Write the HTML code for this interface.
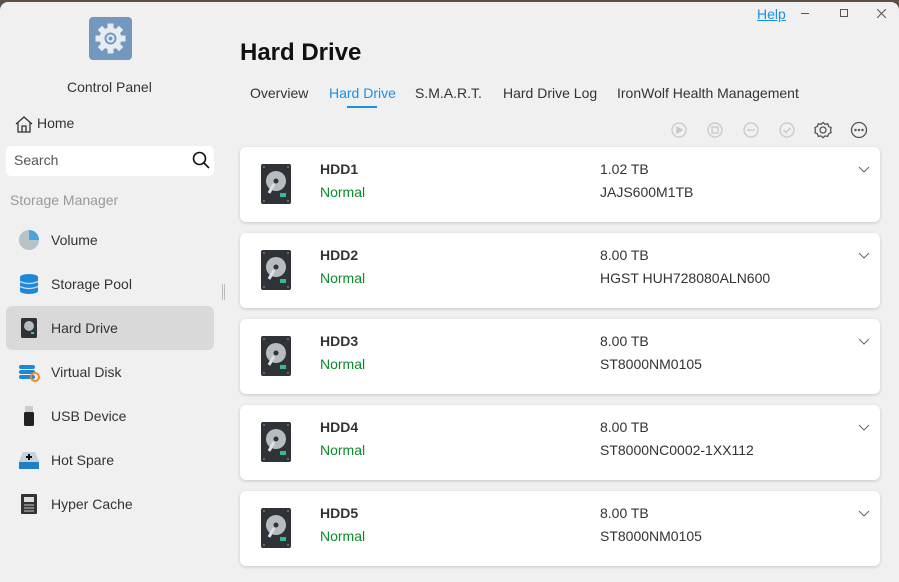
<!DOCTYPE html>
<html><head><style>
*{box-sizing:border-box;margin:0;padding:0}
body{width:899px;height:576px;background:#5a5048;font-family:"Liberation Sans",sans-serif;overflow:hidden;position:relative}
.win{position:absolute;left:0;top:2px;width:899px;height:580px;background:#f0f0f0;border-radius:8px 8px 0 0}
.abs{position:absolute}
.side{font-size:14px;color:#333}
.nav{position:absolute;left:6px;width:208px;height:44px;border-radius:6px}
.nav .ic{position:absolute;left:12px;top:11px;width:22px;height:22px}
.nav span{position:absolute;left:45px;top:14px;font-size:14px;color:#333}
.card{position:absolute;left:240px;width:640px;height:75px;background:#fff;border-radius:6px;box-shadow:0 1px 3px rgba(0,0,0,.18)}
.card .n{position:absolute;left:80px;top:14px;font-weight:bold;font-size:14px;color:#333}
.card .s{position:absolute;left:80px;top:37px;font-size:14px;color:#0a8a2a}
.card .c{position:absolute;left:360px;top:14px;font-size:14px;color:#333}
.card .m{position:absolute;left:360px;top:37px;font-size:14px;color:#333}
.card svg.h{position:absolute;left:21px;top:17px}
.card svg.ch{position:absolute;right:10px;top:19px}
.tab{position:absolute;top:83px;font-size:14px;color:#333}
</style></head><body>
<div class="win">
<div class="abs" style="left:89px;top:15px;width:43px;height:43px;border-radius:4px;background:#7299bd">
<svg width="43" height="43" viewBox="0 0 43 43"><g fill="#e8ecf0" transform="translate(21.5,21.5)">
<circle r="11"/>
<rect x="-3" y="-15" width="6" height="6"/><rect x="-3" y="-15" width="6" height="6" transform="rotate(45)"/><rect x="-3" y="-15" width="6" height="6" transform="rotate(90)"/><rect x="-3" y="-15" width="6" height="6" transform="rotate(135)"/><rect x="-3" y="-15" width="6" height="6" transform="rotate(180)"/><rect x="-3" y="-15" width="6" height="6" transform="rotate(225)"/><rect x="-3" y="-15" width="6" height="6" transform="rotate(270)"/><rect x="-3" y="-15" width="6" height="6" transform="rotate(315)"/>
<circle r="6" fill="#7299bd"/><circle r="4"/><circle r="2" fill="#7299bd"/></g></svg></div>
<div class="abs side" style="left:67px;top:77px">Control Panel</div>
<svg class="abs" style="left:15px;top:113px" width="18" height="18" viewBox="0 0 18 18" fill="none" stroke="#333" stroke-width="1.3"><path d="M1 9L9 2l8 7M3 7.5V17h12V7.5M7 17v-6h4v6"/></svg>
<div class="abs side" style="left:37px;top:113px">Home</div>
<div class="abs" style="left:6px;top:144px;width:208px;height:30px;background:#fff;border-radius:5px"></div>
<div class="abs side" style="left:14px;top:150px;color:#555">Search</div>
<svg class="abs" style="left:192px;top:149px" width="18" height="18" viewBox="0 0 18 18" fill="none" stroke="#111" stroke-width="1.6"><circle cx="7.5" cy="7.5" r="6"/><path d="M12 12l5 5"/></svg>
<div class="abs side" style="left:10px;top:190px;color:#999">Storage Manager</div>
<div class="nav" style="top:216px"><svg class="ic" viewBox="0 0 22 22"><circle cx="11" cy="11" r="10" fill="#b8c3c8"/><path d="M11 11V1a10 10 0 0 1 10 10z" fill="#4aa3e0"/></svg><span>Volume</span></div>
<div class="nav" style="top:260px"><svg class="ic" viewBox="0 0 22 22"><ellipse cx="11" cy="4" rx="9" ry="3" fill="#1e88d8"/><rect x="2" y="4" width="18" height="14" fill="#1e88d8"/><ellipse cx="11" cy="18" rx="9" ry="3" fill="#1e88d8"/><path d="M2 8.5q9 4 18 0M2 13.5q9 4 18 0" stroke="#cde" stroke-width="1.3" fill="none"/></svg><span>Storage Pool</span></div>
<div class="nav" style="top:304px;background:#d9d9d9"><svg class="ic" viewBox="0 0 22 22"><rect x="3" y="1" width="16" height="20" rx="1.5" fill="#2f3337"/><circle cx="11" cy="9" r="5" fill="#b7bdbf"/><rect x="13" y="15" width="3" height="2" fill="#3c9"/></svg><span>Hard Drive</span></div>
<div class="nav" style="top:348px"><svg class="ic" viewBox="0 0 22 22"><rect x="1" y="4" width="16" height="4" rx="2" fill="#1e88d8"/><rect x="1" y="9" width="16" height="4" rx="2" fill="#1e88d8"/><rect x="1" y="14" width="16" height="4" rx="2" fill="#1e88d8"/><circle cx="17" cy="16" r="4" fill="none" stroke="#f08a24" stroke-width="2"/></svg><span>Virtual Disk</span></div>
<div class="nav" style="top:392px"><svg class="ic" viewBox="0 0 22 22"><rect x="7" y="1" width="8" height="6" fill="#ccc"/><rect x="6" y="7" width="10" height="14" rx="1.5" fill="#222"/></svg><span>USB Device</span></div>
<div class="nav" style="top:436px"><svg class="ic" viewBox="0 0 22 22"><path d="M1 12l4-9h12l4 9v8H1z" fill="#c9d1d6"/><rect x="1" y="13" width="20" height="7" fill="#1e7fc8"/><path d="M11 5v6M8 8h6" stroke="#111" stroke-width="2"/></svg><span>Hot Spare</span></div>
<div class="nav" style="top:480px"><svg class="ic" viewBox="0 0 22 22"><rect x="3" y="1" width="16" height="20" rx="1" fill="#333"/><rect x="6" y="4" width="10" height="5" fill="#ddd"/><path d="M6 12h10M6 15h10M6 18h10" stroke="#ccc"/></svg><span>Hyper Cache</span></div>
<div class="abs" style="left:222px;top:282px;width:3px;height:16px;border-left:1px solid #bbb;border-right:1px solid #bbb"></div>

<div class="abs" style="left:757px;top:4px;font-size:14px;color:#1a8fe6;text-decoration:underline">Help</div>
<div class="abs" style="left:801px;top:11px;width:8px;height:1px;background:#555"></div>
<div class="abs" style="left:840px;top:7px;width:8px;height:8px;border:1px solid #555"></div>
<svg class="abs" style="left:877px;top:7px" width="9" height="9" stroke="#555"><path d="M0 0l9 9M9 0L0 9"/></svg>
<div class="abs" style="left:240px;top:37px;font-size:24px;font-weight:bold;color:#111">Hard Drive</div>
<div class="tab" style="left:250px">Overview</div>
<div class="tab" style="left:329px;color:#1a8fe6">Hard Drive</div>
<div class="abs" style="left:347px;top:104px;width:30px;height:2px;background:#1a8fe6"></div>
<div class="tab" style="left:415px">S.M.A.R.T.</div>
<div class="tab" style="left:503px">Hard Drive Log</div>
<div class="tab" style="left:617px">IronWolf Health Management</div>
<svg class="abs" style="left:670px;top:119px" width="200" height="18" fill="none" stroke-width="1.3">
<g stroke="#c8c8c8"><circle cx="9" cy="9" r="7"/><path d="M7 6v6l5-3z" fill="#c8c8c8"/>
<circle cx="45" cy="9" r="7"/><rect x="42" y="6" width="6" height="6"/>
<circle cx="81" cy="9" r="7"/><path d="M77 9h8"/>
<circle cx="117" cy="9" r="7"/><path d="M113.5 9l2.5 2.5 4.5-4.5"/></g>
<g stroke="#555"><circle cx="153" cy="9" r="3"/><path d="M153 1.5l2 1.8 2.7-.5.9 2.6 2.5 1.2-.6 2.6.6 2.4-2.5 1.2-.9 2.6-2.7-.5-2 1.8-2-1.8-2.7.5-.9-2.6-2.5-1.2.6-2.4-.6-2.6 2.5-1.2.9-2.6 2.7.5z"/>
<circle cx="189" cy="9" r="7.5"/><circle cx="185.5" cy="9" r=".6" fill="#555"/><circle cx="189" cy="9" r=".6" fill="#555"/><circle cx="192.5" cy="9" r=".6" fill="#555"/></g></svg>

<div class="card" style="top:145px"><svg class="h" width="30" height="40" viewBox="0 0 30 40"><rect x="0" y="0" width="30" height="40" rx="2" fill="#2f3337"/><circle cx="3" cy="3" r="1" fill="#777"/><circle cx="27" cy="3" r="1" fill="#777"/><circle cx="3" cy="37" r="1" fill="#777"/><circle cx="27" cy="37" r="1" fill="#777"/><circle cx="15" cy="17" r="10" fill="#b7bdbf"/><circle cx="15" cy="17" r="2.5" fill="#2f3337"/><path d="M13 20l-5 9" stroke="#dde" stroke-width="3"/><rect x="19" y="29" width="6" height="4" fill="#3b9"/></svg><div class="n">HDD1</div><div class="s">Normal</div><div class="c">1.02 TB</div><div class="m">JAJS600M1TB</div><svg class="ch" width="12" height="8" fill="none" stroke="#666"><path d="M1 1l5 5 5-5"/></svg></div>
<div class="card" style="top:231px"><svg class="h" width="30" height="40" viewBox="0 0 30 40"><rect x="0" y="0" width="30" height="40" rx="2" fill="#2f3337"/><circle cx="3" cy="3" r="1" fill="#777"/><circle cx="27" cy="3" r="1" fill="#777"/><circle cx="3" cy="37" r="1" fill="#777"/><circle cx="27" cy="37" r="1" fill="#777"/><circle cx="15" cy="17" r="10" fill="#b7bdbf"/><circle cx="15" cy="17" r="2.5" fill="#2f3337"/><path d="M13 20l-5 9" stroke="#dde" stroke-width="3"/><rect x="19" y="29" width="6" height="4" fill="#3b9"/></svg><div class="n">HDD2</div><div class="s">Normal</div><div class="c">8.00 TB</div><div class="m">HGST HUH728080ALN600</div><svg class="ch" width="12" height="8" fill="none" stroke="#666"><path d="M1 1l5 5 5-5"/></svg></div>
<div class="card" style="top:317px"><svg class="h" width="30" height="40" viewBox="0 0 30 40"><rect x="0" y="0" width="30" height="40" rx="2" fill="#2f3337"/><circle cx="3" cy="3" r="1" fill="#777"/><circle cx="27" cy="3" r="1" fill="#777"/><circle cx="3" cy="37" r="1" fill="#777"/><circle cx="27" cy="37" r="1" fill="#777"/><circle cx="15" cy="17" r="10" fill="#b7bdbf"/><circle cx="15" cy="17" r="2.5" fill="#2f3337"/><path d="M13 20l-5 9" stroke="#dde" stroke-width="3"/><rect x="19" y="29" width="6" height="4" fill="#3b9"/></svg><div class="n">HDD3</div><div class="s">Normal</div><div class="c">8.00 TB</div><div class="m">ST8000NM0105</div><svg class="ch" width="12" height="8" fill="none" stroke="#666"><path d="M1 1l5 5 5-5"/></svg></div>
<div class="card" style="top:403px"><svg class="h" width="30" height="40" viewBox="0 0 30 40"><rect x="0" y="0" width="30" height="40" rx="2" fill="#2f3337"/><circle cx="3" cy="3" r="1" fill="#777"/><circle cx="27" cy="3" r="1" fill="#777"/><circle cx="3" cy="37" r="1" fill="#777"/><circle cx="27" cy="37" r="1" fill="#777"/><circle cx="15" cy="17" r="10" fill="#b7bdbf"/><circle cx="15" cy="17" r="2.5" fill="#2f3337"/><path d="M13 20l-5 9" stroke="#dde" stroke-width="3"/><rect x="19" y="29" width="6" height="4" fill="#3b9"/></svg><div class="n">HDD4</div><div class="s">Normal</div><div class="c">8.00 TB</div><div class="m">ST8000NC0002-1XX112</div><svg class="ch" width="12" height="8" fill="none" stroke="#666"><path d="M1 1l5 5 5-5"/></svg></div>
<div class="card" style="top:489px"><svg class="h" width="30" height="40" viewBox="0 0 30 40"><rect x="0" y="0" width="30" height="40" rx="2" fill="#2f3337"/><circle cx="3" cy="3" r="1" fill="#777"/><circle cx="27" cy="3" r="1" fill="#777"/><circle cx="3" cy="37" r="1" fill="#777"/><circle cx="27" cy="37" r="1" fill="#777"/><circle cx="15" cy="17" r="10" fill="#b7bdbf"/><circle cx="15" cy="17" r="2.5" fill="#2f3337"/><path d="M13 20l-5 9" stroke="#dde" stroke-width="3"/><rect x="19" y="29" width="6" height="4" fill="#3b9"/></svg><div class="n">HDD5</div><div class="s">Normal</div><div class="c">8.00 TB</div><div class="m">ST8000NM0105</div><svg class="ch" width="12" height="8" fill="none" stroke="#666"><path d="M1 1l5 5 5-5"/></svg></div>
</div>
</body></html>
